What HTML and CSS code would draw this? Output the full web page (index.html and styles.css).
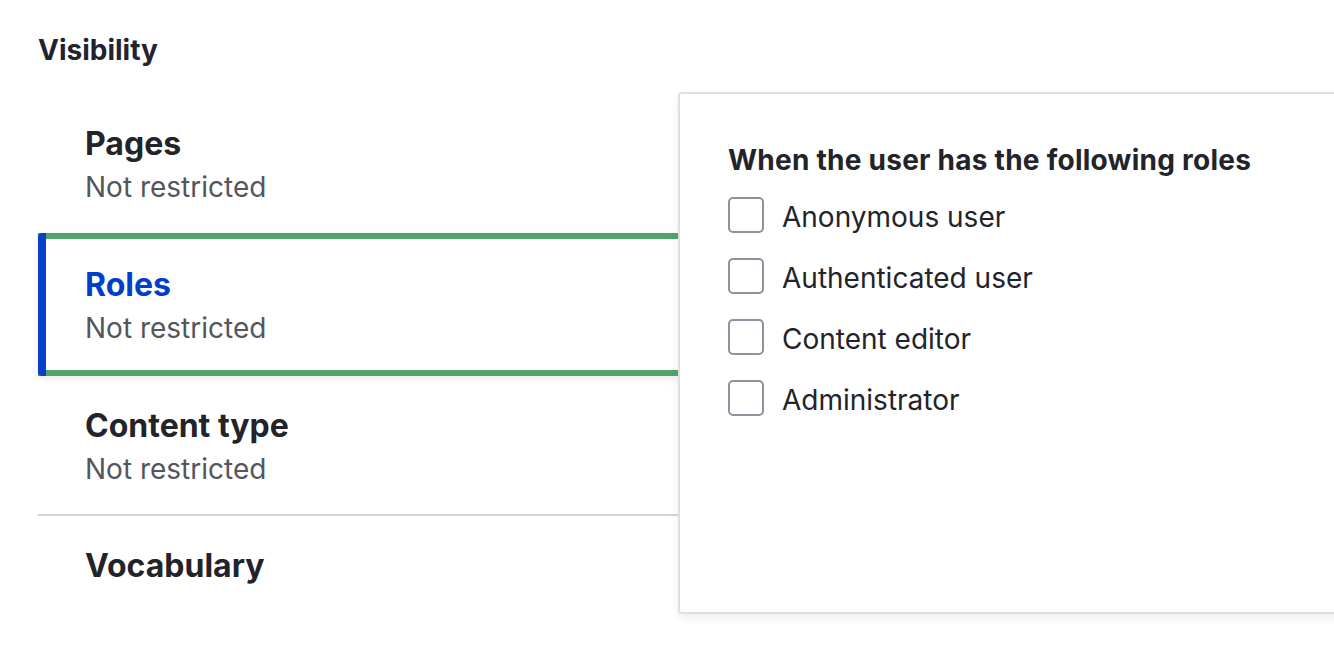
FILE: index.html
```html
<!DOCTYPE html>
<html lang="en">
<head>
<meta charset="utf-8">
<title>Visibility</title>
<link rel="stylesheet" href="styles.css">
</head>
<body>
<div class="page">
  <h2 class="heading">Visibility</h2>
  <div class="vtabs">
    <ul class="menu">
      <li class="item item-first">
        <div class="title">Pages</div>
        <div class="summary">Not restricted</div>
      </li>
      <li class="item item-selected">
        <div class="title">Roles</div>
        <div class="summary">Not restricted</div>
      </li>
      <li class="item item-third">
        <div class="title">Content type</div>
        <div class="summary">Not restricted</div>
      </li>
      <li class="item item-last">
        <div class="title">Vocabulary</div>
      </li>
    </ul>
    <div class="panel">
      <div class="legend">When the user has the following roles</div>
      <div class="options">
        <label class="option"><span class="box"></span><span class="label">Anonymous user</span></label>
        <label class="option"><span class="box"></span><span class="label">Authenticated user</span></label>
        <label class="option"><span class="box"></span><span class="label">Content editor</span></label>
        <label class="option"><span class="box"></span><span class="label">Administrator</span></label>
      </div>
    </div>
  </div>
</div>
</body>
</html>
```
FILE: styles.css
```css
html, body {
  margin: 0;
  padding: 0;
  background: #ffffff;
  overflow: hidden;
}
body {
  font-family: Inter, "Noto Sans", "Liberation Sans", sans-serif;
  color: #232429;
  width: 1334px;
  height: 664px;
}
.page {
  padding: 32px 0 0 38px;
}
.heading {
  margin: 0;
  font-size: 28px;
  line-height: 36px;
  font-weight: 700;
  color: #222330;
}
.vtabs {
  display: flex;
  align-items: flex-start;
  margin-top: 24px;
}
.menu {
  list-style: none;
  margin: 0;
  padding: 0;
  width: 642px;
  flex: none;
}
.item {
  position: relative;
  padding: 30px 0 25px 47px;
}
.item-first {
  padding-top: 32px;
  padding-bottom: 28px;
}
.item-third {
  padding-bottom: 27px;
  border-bottom: 2px solid #d3d4d9;
}
.item-last {
  padding-top: 30px;
}
.item-selected {
  padding-top: 26px;
  padding-bottom: 24px;
  border-top: 6px solid #51a46d;
  border-bottom: 6px solid #51a46d;
  box-shadow: 0 3px 8px rgba(0, 0, 0, 0.08);
}
.item-selected::before {
  content: "";
  position: absolute;
  left: 0;
  top: -6px;
  bottom: -6px;
  width: 8px;
  background: #0a3fcc;
  border-radius: 4px 0 0 4px;
}
.title {
  font-size: 32px;
  line-height: 40px;
  font-weight: 700;
  color: #232429;
}
.item-selected .title {
  color: #003ecc;
}
.summary {
  margin-top: 5px;
  font-size: 28px;
  line-height: 36px;
  color: #55565b;
}
.panel {
  position: relative;
  z-index: 1;
  flex: 1;
  margin-left: -2px;
  margin-right: -20px;
  border: 2px solid #dedfe4;
  border-radius: 4px;
  background: #ffffff;
  box-shadow: 0 4px 10px rgba(0, 0, 0, 0.07);
  padding: 48px 0 0 48px;
  box-sizing: border-box;
  height: 522px;
}
.legend {
  font-size: 28px;
  line-height: 36px;
  font-weight: 700;
  letter-spacing: 0.25px;
  color: #232429;
}
.options {
  margin-top: 19px;
  display: flex;
  flex-direction: column;
  gap: 25px;
}
.option {
  display: flex;
  align-items: center;
  gap: 18px;
  height: 36px;
}
.box {
  width: 36px;
  height: 36px;
  box-sizing: border-box;
  border: 2px solid #8e929c;
  border-radius: 5px;
  background: #ffffff;
  flex: none;
}
.label {
  font-size: 28px;
  line-height: 36px;
  padding-top: 4px;
  color: #232429;
}
```
